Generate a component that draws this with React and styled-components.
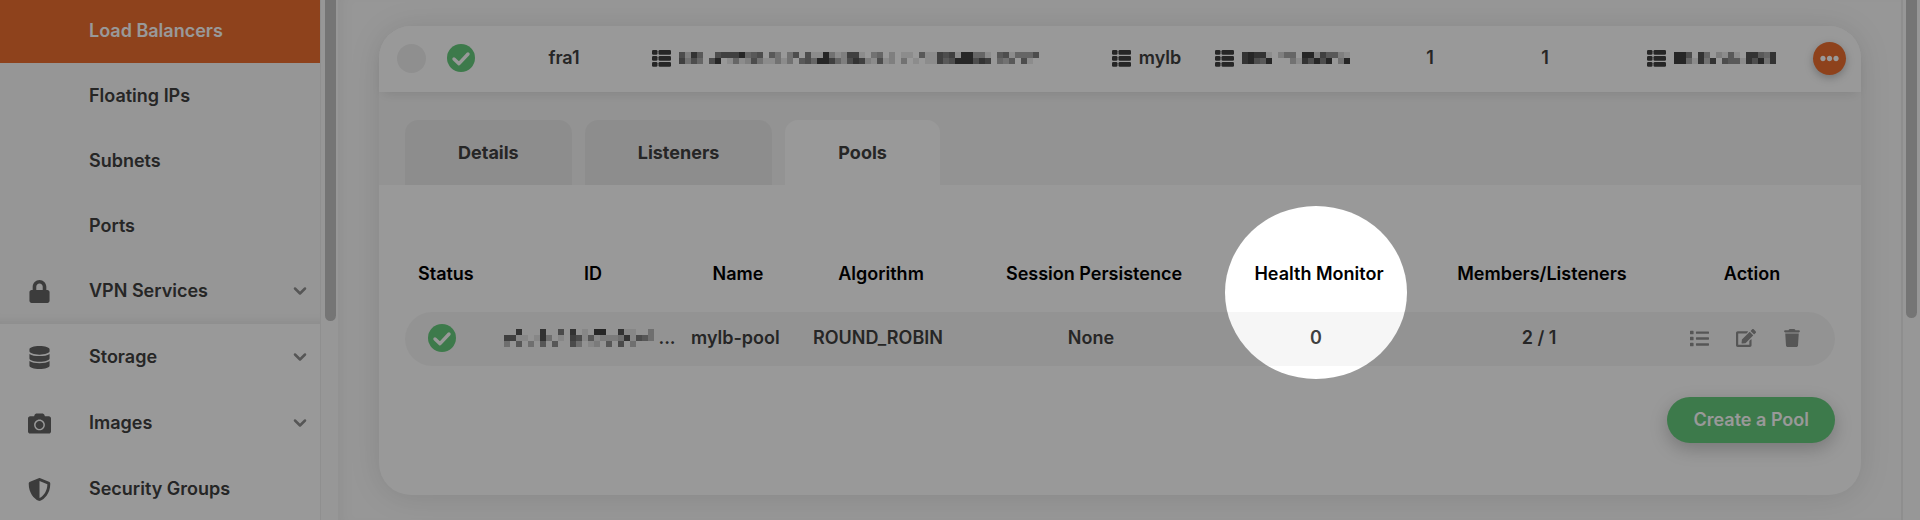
import React from 'react';
import styled, { createGlobalStyle, css } from 'styled-components';
import { FaLock, FaDatabase, FaCamera, FaShieldAlt, FaEdit, FaList, FaEllipsisH } from 'react-icons/fa';
import { FaTrash } from 'react-icons/fa6';
import { FiChevronDown } from 'react-icons/fi';

const color = {
  orange: '#ed6e30',
  green: '#67cb7d',
  text: '#404040',
  icon: '#646464',
  muted: '#8f8f8f',
  soft: '#f6f6f6',
  thumb: '#c3c3c3',
};

const GlobalStyle = createGlobalStyle`
  *, *::before, *::after { box-sizing: border-box; }
  body {
    margin: 0;
    font-family: Inter, "Liberation Sans", sans-serif;
    font-size: 18px;
    font-weight: 600;
    line-height: 24px;
    color: ${color.text};
  }
  button { font: inherit; color: inherit; border: 0; padding: 0; background: none; cursor: pointer; }
  svg { display: block; flex: none; }
`;

const Page = styled.div`
  position: relative;
  display: flex;
  height: 100vh;
  overflow: hidden;
  background: #fcfcfc;
`;

const Sidebar = styled.nav`
  flex: none;
  width: 321px;
  overflow: hidden;
  border-right: 1px solid #efefef;
  background: #fff;
`;

const Menu = styled.ul`
  margin: 0;
  padding: 0;
  list-style: none;
`;

const SubMenu = styled(Menu)`
  margin-top: -2px;
  background: #fafafa;
  box-shadow: inset 0 -10px 10px -8px rgba(0, 0, 0, 0.08);
`;

const MenuLink = styled.a`
  display: flex;
  align-items: center;
  height: ${(p) => (p.$top ? 66 : 65)}px;
  padding: 0 10px 0 27px;
  color: inherit;
  text-decoration: none;
  ${(p) => p.$active && css`background: ${color.orange}; color: #fff;`}
`;

const MenuIcon = styled.span`
  display: flex;
  justify-content: center;
  width: 24px;
  margin-right: 38px;
  color: ${color.icon};
`;

const MenuLabel = styled.span`
  flex: 1;
`;

const Chevron = styled(FiChevronDown)`
  color: ${color.muted};
`;

const Track = styled.div`
  flex: none;
  width: ${(p) => p.$width}px;
  padding-left: 4px;
  background: #fcfcfc;
  ${(p) => p.$edge && css`padding-left: 3px; border-left: 2px solid #ededed;`}
`;

const Thumb = styled.div`
  width: 11px;
  height: ${(p) => p.$length}px;
  border-radius: 0 0 6px 6px;
  background: ${color.thumb};
`;

const Main = styled.main`
  flex: 1;
  min-width: 0;
  padding: 26px 40px 25px 41px;
  box-shadow: inset 12px 0 14px -8px rgba(0, 0, 0, 0.05);
`;

const Card = styled.section`
  border-radius: 32px;
  background: #fff;
  box-shadow: 0 2px 32px rgba(0, 0, 0, 0.11);
`;

const Summary = styled.header`
  position: relative;
  display: grid;
  grid-template-columns: 148fr 38fr 525fr 77fr 194fr 102fr 128fr 204fr 32px;
  align-items: center;
  height: 66px;
  padding: 0 16px 2px 18px;
  border-radius: 32px 32px 0 0;
  background: #fff;
  box-shadow: 0 6px 12px -4px rgba(0, 0, 0, 0.1);
`;

const Cell = styled.div`
  display: flex;
  align-items: center;
  justify-content: ${(p) => (p.$start ? 'flex-start' : 'center')};
  gap: ${(p) => (p.$start ? 21 : 8)}px;
`;

const Picker = styled.input`
  appearance: none;
  width: 29px;
  height: 29px;
  margin: 0;
  border-radius: 50%;
  background: #efefef;
`;

const MoreButton = styled.button`
  display: flex;
  align-items: center;
  justify-content: center;
  width: 33px;
  height: 33px;
  border-radius: 50%;
  background: ${color.orange};
  color: #fff;
  box-shadow: 0 3px 8px rgba(0, 0, 0, 0.25);
`;

const Tabs = styled.div`
  display: flex;
  gap: 13px;
  padding: 28px 26px 0;
  background: ${color.soft};
`;

const Tab = styled.button`
  height: 65px;
  padding: 0 53px;
  border-radius: 13px 13px 0 0;
  background: ${(p) => (p.$active ? '#fff' : '#ececec')};
  font-weight: 700;
`;

const Panel = styled.div`
  display: flex;
  flex-direction: column;
  align-items: flex-end;
  padding: 49px 26px 52px;
`;

const Table = styled.table`
  width: 100%;
  table-layout: fixed;
  border-collapse: separate;
  border-spacing: 0;
  text-align: center;
  white-space: nowrap;
`;

const Col = styled.col`
  width: ${(p) => p.$width}px;
`;

const Th = styled.th`
  position: relative;
  height: 78px;
  padding: 2px 0 0 6px;
  color: #000;
  font-weight: 600;
  &:first-child { padding-left: 13px; text-align: left; }
  &:last-child { padding-left: 18px; }
`;

const Td = styled.td`
  height: 54px;
  padding: 0 0 2px;
  background: ${color.soft};
  &:first-child { padding-left: 23px; border-radius: 27px 0 0 27px; }
  &:last-child { padding-left: 5px; border-radius: 0 27px 27px 0; }
`;

const MaskedId = styled.div`
  display: flex;
  align-items: center;
  justify-content: center;
  gap: 4px;
`;

const Actions = styled.div`
  display: flex;
  align-items: center;
  justify-content: center;
  gap: 27px;
  color: ${color.muted};
`;

const CreateButton = styled.button`
  height: 46px;
  margin-top: 31px;
  padding: 0 26px;
  border-radius: 23px;
  background: ${color.green};
  color: #fff;
  font-weight: 600;
  box-shadow: 0 6px 18px rgba(0, 0, 0, 0.22);
`;

const Spotlight = styled.span`
  position: absolute;
  z-index: 10;
  top: -28px;
  left: calc(50% - 91px);
  width: 182px;
  height: 173px;
  border-radius: 50%;
  box-shadow: 0 0 0 2400px rgba(0, 0, 0, 0.4);
  pointer-events: none;
`;

function StatusOk() {
  return (
    <svg width="28" height="28" viewBox="0 0 28 28" role="img" aria-label="Active">
      <circle cx="14" cy="14" r="14" fill={color.green} />
      <path d="M7 15l5 4.700 9-9.700" fill="none" stroke="#fff" strokeWidth="3.400" strokeLinecap="round" strokeLinejoin="round" />
    </svg>
  );
}

function ListIcon() {
  return (
    <svg width="19" height="17" viewBox="0 0 19 17" fill={color.text} aria-hidden="true">
      {[0, 6, 12].map((y) => (
        <g key={y}>
          <rect x="0" y={y} width="5.500" height="4.700" rx="1.300" />
          <rect x="6.500" y={y} width="12.500" height="4.700" rx="1.300" />
        </g>
      ))}
    </svg>
  );
}

/* Each digit is the darkness of one block, 0 (clear) to 9 (solid). */
function Mosaic({ rows }) {
  const size = 6;
  return (
    <svg width={rows[0].length * size} height={rows.length * size} shapeRendering="crispEdges" aria-hidden="true">
      {rows.flatMap((row, y) =>
        [...row].map((d, x) => (
          <rect key={`${x}-${y}`} x={x * size} y={y * size} width={size} height={size} fill="#404040" opacity={d / 9} />
        ))
      )}
    </svg>
  );
}

const networkItems = [
  { label: 'Load Balancers', active: true },
  { label: 'Floating IPs' },
  { label: 'Subnets' },
  { label: 'Ports' },
  { label: 'VPN Services', icon: <FaLock size={23} />, expandable: true },
];

const mainItems = [
  { label: 'Storage', icon: <FaDatabase size={23} />, expandable: true },
  { label: 'Images', icon: <FaCamera size={23} />, expandable: true },
  { label: 'Security Groups', icon: <FaShieldAlt size={23} /> },
];

const columns = [
  ['Status', 84],
  ['ID', 202],
  ['Name', 88],
  ['Algorithm', 198],
  ['Session Persistence', 228],
  ['Health Monitor', 222],
  ['Members/Listeners', 224],
  ['Action', 184],
];

const masks = {
  id: [
    '628500677794560530360611931277103402011051176719944105614446',
    '736406901412631131305649974268721612030101175699968704350610',
  ],
  network: ['898810244099275521', '896590003186969039'],
  address: ['99608402151088548', '99418380655186938'],
  pool: ['0080008006080109900811003', '7711018301076151222381653', '3050305050063012050603000'],
};

function MenuItem({ item }) {
  return (
    <li>
      <MenuLink href="#" $top={Boolean(item.icon)} $active={item.active}>
        <MenuIcon>{item.icon}</MenuIcon>
        <MenuLabel>{item.label}</MenuLabel>
        {item.expandable && <Chevron size={20} strokeWidth={3} />}
      </MenuLink>
    </li>
  );
}

export default function App() {
  return (
    <Page>
      <GlobalStyle />
      <Sidebar>
        <SubMenu>{networkItems.map((item) => <MenuItem key={item.label} item={item} />)}</SubMenu>
        <Menu>{mainItems.map((item) => <MenuItem key={item.label} item={item} />)}</Menu>
      </Sidebar>
      <Track $width={17}><Thumb $length={321} /></Track>

      <Main>
        <Card>
          <Summary>
            <Cell $start>
              <Picker type="checkbox" aria-label="Select load balancer" />
              <StatusOk />
            </Cell>
            <Cell>fra1</Cell>
            <Cell><ListIcon /><Mosaic rows={masks.id} /></Cell>
            <Cell><ListIcon />mylb</Cell>
            <Cell><ListIcon /><Mosaic rows={masks.network} /></Cell>
            <Cell>1</Cell>
            <Cell>1</Cell>
            <Cell><ListIcon /><Mosaic rows={masks.address} /></Cell>
            <MoreButton aria-label="More"><FaEllipsisH size={19} /></MoreButton>
          </Summary>

          <Tabs role="tablist">
            <Tab role="tab">Details</Tab>
            <Tab role="tab">Listeners</Tab>
            <Tab role="tab" aria-selected="true" $active>Pools</Tab>
          </Tabs>

          <Panel>
            <Table>
              <colgroup>{columns.map(([name, width]) => <Col key={name} $width={width} />)}</colgroup>
              <thead>
                <tr>
                  {columns.map(([name]) => (
                    <Th key={name} scope="col">
                      {name}
                      {name === 'Health Monitor' && <Spotlight />}
                    </Th>
                  ))}
                </tr>
              </thead>
              <tbody>
                <tr>
                  <Td><StatusOk /></Td>
                  <Td><MaskedId><Mosaic rows={masks.pool} />...</MaskedId></Td>
                  <Td>mylb-pool</Td>
                  <Td>ROUND_ROBIN</Td>
                  <Td>None</Td>
                  <Td>0</Td>
                  <Td>2 / 1</Td>
                  <Td>
                    <Actions>
                      <button aria-label="View"><FaList size={19} /></button>
                      <button aria-label="Edit"><FaEdit size={20} /></button>
                      <button aria-label="Delete"><FaTrash size={18} /></button>
                    </Actions>
                  </Td>
                </tr>
              </tbody>
            </Table>
            <CreateButton>Create a Pool</CreateButton>
          </Panel>
        </Card>
      </Main>

      <Track $width={19} $edge><Thumb $length={318} /></Track>
    </Page>
  );
}
